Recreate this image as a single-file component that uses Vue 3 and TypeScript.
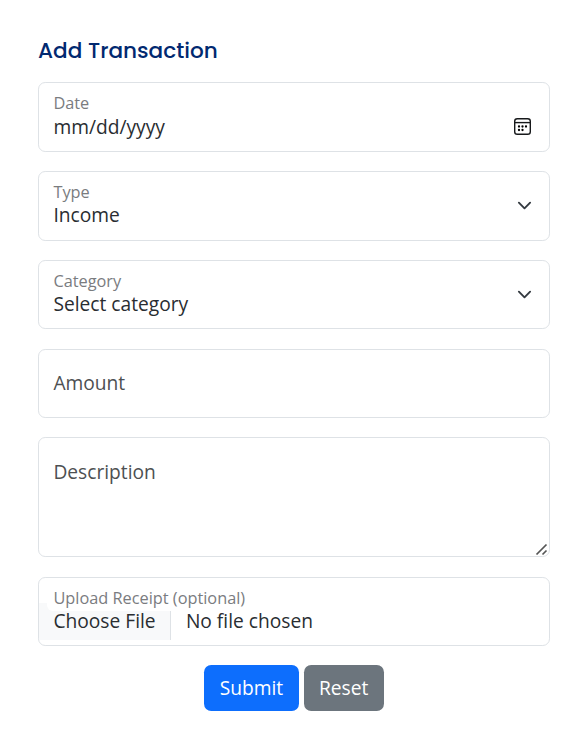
<script setup lang="ts">
interface Field {
  label: string
  value: string
  icon?: 'calendar' | 'chevron'
}

const fields: Field[] = [
  { label: 'Date', value: 'mm/dd/yyyy', icon: 'calendar' },
  { label: 'Type', value: 'Income', icon: 'chevron' },
  { label: 'Category', value: 'Select category', icon: 'chevron' },
]
</script>

<template>
  <form class="form" @submit.prevent>
    <h1 class="title">Add Transaction</h1>

    <div v-for="field in fields" :key="field.label" class="field">
      <div class="text">
        <span class="label">{{ field.label }}</span>
        <span class="value" :class="{ date: field.icon === 'calendar' }">{{ field.value }}</span>
      </div>
      <svg v-if="field.icon === 'calendar'" class="calendar" viewBox="0 0 19 19" fill="none">
        <rect x="1.7" y="1.7" width="15.6" height="15.6" rx="2.6" stroke="#17191b" stroke-width="1.4" />
        <path d="M1.7 5.6h15.6" stroke="#17191b" stroke-width="1.4" />
        <g fill="#000">
          <circle cx="6" cy="9.5" r="1.15" />
          <circle cx="9.5" cy="9.5" r="1.15" />
          <circle cx="13" cy="9.5" r="1.15" />
          <circle cx="6" cy="13" r="1.15" />
          <circle cx="9.5" cy="13" r="1.15" />
        </g>
      </svg>
      <svg v-else class="chevron" viewBox="0 0 16 16" fill="none">
        <path d="m2 5 6 6 6-6" stroke="#343a40" stroke-width="2" stroke-linecap="round" stroke-linejoin="round" />
      </svg>
    </div>

    <div class="field empty">
      <span class="placeholder">Amount</span>
    </div>

    <div class="field empty area">
      <span class="placeholder">Description</span>
      <svg class="grip" viewBox="0 0 13 13" fill="none" stroke="#555" stroke-width="1.7">
        <path d="M1.5 11.5 11.5 1.5M7.5 11.5l4-4" />
      </svg>
    </div>

    <div class="field file">
      <span class="label file-label">Upload Receipt (optional)</span>
      <div class="picker">
        <span class="choose">Choose File</span>
        <span class="chosen">No file chosen</span>
      </div>
    </div>

    <div class="actions">
      <button class="btn submit" type="submit">Submit</button>
      <button class="btn reset" type="reset">Reset</button>
    </div>
  </form>
</template>

<style>
body {
  background: #fff;
}
</style>

<style scoped>
.form {
  box-sizing: border-box;
  width: 586px;
  padding: 36.2px 36px 0 38px;
  font-family: "Open Sans", "Noto Sans", sans-serif;
  font-size: 19.2px;
  line-height: 24px;
  color: #292d31;
}
.title {
  height: 46px;
  margin: 0;
  font-family: Poppins, Inter, sans-serif;
  font-size: 21.6px;
  font-weight: 500;
  line-height: 29px;
  color: #012970;
}
.field {
  box-sizing: border-box;
  display: flex;
  justify-content: space-between;
  height: 69.6px;
  margin-bottom: 19.2px;
  padding: 0 14.4px;
  border: 1px solid #dee2e6;
  border-radius: 7.2px;
}
.text {
  display: flex;
  flex-direction: column;
  padding-top: 9px;
}
.label {
  font-size: 16.32px;
  line-height: 23px;
  color: #7a7c7f;
}
.value {
  margin-top: -1px;
}
.date {
  padding-top: 1px;
}
.calendar {
  width: 19px;
  height: 19px;
  margin: 34px 2.6px 0 0;
}
.chevron {
  width: 15px;
  height: 15px;
  margin: 26px 3px 0 0;
}
.placeholder {
  padding-top: 21px;
  color: #4d5052;
}
.area {
  height: 120px;
  padding-right: 1px;
}
.area .placeholder {
  padding-top: 22px;
}
.grip {
  align-self: flex-end;
  width: 13px;
  height: 13px;
}
.file {
  flex-direction: column;
  justify-content: flex-start;
  padding: 9px 0 0;
}
.file-label {
  position: relative;
  z-index: 1;
  height: 24px;
  margin: 0 10px 0 8px;
  padding-left: 6.4px;
  border-radius: 6px;
  background: #fff;
}
.picker {
  display: flex;
  height: 37px;
  margin-top: -8px;
}
.choose,
.chosen {
  padding: 6px 14.4px 0;
}
.chosen {
  padding-left: 14.9px;
}
.choose {
  border-right: 1px solid #dee2e6;
  background: #f8f9fa;
}
.actions {
  display: flex;
  justify-content: center;
  gap: 5px;
}
.btn {
  height: 45.6px;
  padding: 0 15.4px;
  border: 0;
  border-radius: 7.2px;
  font: inherit;
  color: #fff;
}
.submit {
  background: #0d6efd;
}
.reset {
  background: #6c757d;
}
</style>
